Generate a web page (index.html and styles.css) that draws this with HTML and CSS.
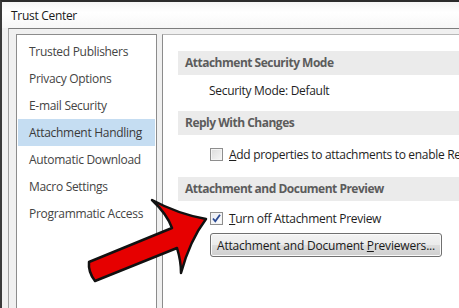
FILE: index.html
```html
<!DOCTYPE html>
<html lang="en">
  <head>
    <meta charset="UTF-8" />
    <title>Trust Center</title>
    <link rel="stylesheet" href="styles.css">
  </head>
  <body>
    <div class="window">
      <div class="titlebar">
        <span class="title">Trust Center</span>
      </div>

      <div class="client">
        <ul class="nav">
          <li>Trusted Publishers</li>
          <li>Privacy Options</li>
          <li>E-mail Security</li>
          <li class="active">Attachment Handling</li>
          <li>Automatic Download</li>
          <li>Macro Settings</li>
          <li>Programmatic Access</li>
        </ul>

        <div class="panel">
          <div class="section-head">Attachment Security Mode</div>
          <p class="mode">Security Mode: Default</p>

          <div class="section-head">Reply With Changes</div>
          <label class="check check-reply">
            <span class="box"></span>
            <span><u>A</u>dd properties to attachments to enable Re</span>
          </label>

          <div class="section-head">Attachment and Document Preview</div>
          <label class="check check-preview">
            <span class="box checked">
              <svg viewBox="0 0 11 11" width="11" height="11">
                <path d="M2 5.5 L4.3 8.3 L9 1.8" fill="none" stroke="#2b4a93" stroke-width="1.8" />
              </svg>
            </span>
            <span><u>T</u>urn off Attachment Preview</span>
          </label>
          <button class="btn">Attachment and Document <u>P</u>reviewers...</button>
        </div>
      </div>

      <!-- red pointer drawn over the dialog -->
      <svg class="arrow" viewBox="0 0 459 308" width="459" height="308">
        <path d="M206 219 Q178 214 152 200 Q167 214 172 228 L89 262 Q88 272 95 281 L177 248 Q181 261 181 273 Q190 240 206 219 Z"
              fill="#e60000" stroke="#111" stroke-width="2.5" stroke-linejoin="round" />
      </svg>
    </div>
  </body>
</html>
```

FILE: styles.css
```css
html {
  box-sizing: border-box;
}

*,
*::before,
*::after {
  margin: 0;
  padding: 0;
  box-sizing: inherit;
}

body {
  width: 459px;
  height: 308px;
  overflow: hidden;
  font-family: "Open Sans", "Liberation Sans", sans-serif;
  font-size: 12px;
  letter-spacing: -0.3px;
  color: #1e1e1e;
  background: #f0f0f0;
}

.window {
  position: relative;
  height: 308px;
  border-top: 2px solid #2b2b2b;
  border-left: 2px solid #3a3a3a;
  background: #f0f0f0;
}

.titlebar {
  height: 26px;
  display: flex;
  align-items: center;
  padding-left: 9px;
  background: linear-gradient(to bottom, #f4f4f4 0%, #ffffff 40%, #f7f7f7 100%);
}

.title {
  font-size: 12px;
  color: #1a1a1a;
}

.client {
  display: flex;
  gap: 5px;
  height: 280px;
  margin-left: 6px;
  padding: 5px 0 0 7px;
  border-top: 1px solid #7d7d7d;
  border-left: 1px solid #a0a0a0;
  background: #f0f0f0;
}

.nav {
  list-style: none;
  width: 141px;
  flex-shrink: 0;
  padding: 3px 1px 0;
  background: #fff;
  border: 1px solid #8c8c8c;
  border-bottom: none;
}

.nav li {
  height: 27px;
  line-height: 27px;
  padding-left: 11px;
  color: #444;
  white-space: nowrap;
}

.nav li.active {
  background: #c5ddf2;
  color: #3a3a3a;
}

.panel {
  flex: 1;
  min-width: 0;
  padding: 16px 0 0 15px;
  background: #fff;
  border-top: 1px solid #b8b8b8;
  border-left: 1px solid #8c8c8c;
  white-space: nowrap;
  overflow: hidden;
}

.section-head {
  height: 24px;
  line-height: 24px;
  padding-left: 7px;
  background: #ebebeb;
  color: #5c5c5c;
  font-weight: 700;
  letter-spacing: -0.5px;
}

.mode {
  line-height: 20px;
  padding: 6px 0 10px 31px;
}

.check {
  display: flex;
  align-items: center;
  gap: 6px;
  height: 20px;
  padding-left: 32px;
}

.check-reply {
  margin: 9px 0 13px;
}

.check-preview {
  margin-top: 7px;
}

.box {
  flex-shrink: 0;
  width: 13px;
  height: 13px;
  display: flex;
  align-items: center;
  justify-content: center;
  border: 1px solid #8e8e8e;
  background: linear-gradient(135deg, #dcdcdc 0%, #f6f6f6 100%);
  box-shadow: inset 0 0 0 1px #f4f4f4;
}

.box.checked {
  background: linear-gradient(135deg, #e6eaf2 0%, #ffffff 100%);
}

.btn {
  display: block;
  width: 232px;
  height: 24px;
  margin: 5px 0 0 32px;
  font-family: inherit;
  font-size: 12px;
  letter-spacing: -0.2px;
  color: #1a1a1a;
  border: 1px solid #707070;
  border-radius: 3px;
  background: linear-gradient(to bottom, #f3f3f3 0%, #ebebeb 50%, #dddddd 51%, #cfcfcf 100%);
  box-shadow: inset 0 0 0 1px #fbfbfb;
}

.arrow {
  position: absolute;
  top: -2px;
  left: -2px;
  pointer-events: none;
}
```
